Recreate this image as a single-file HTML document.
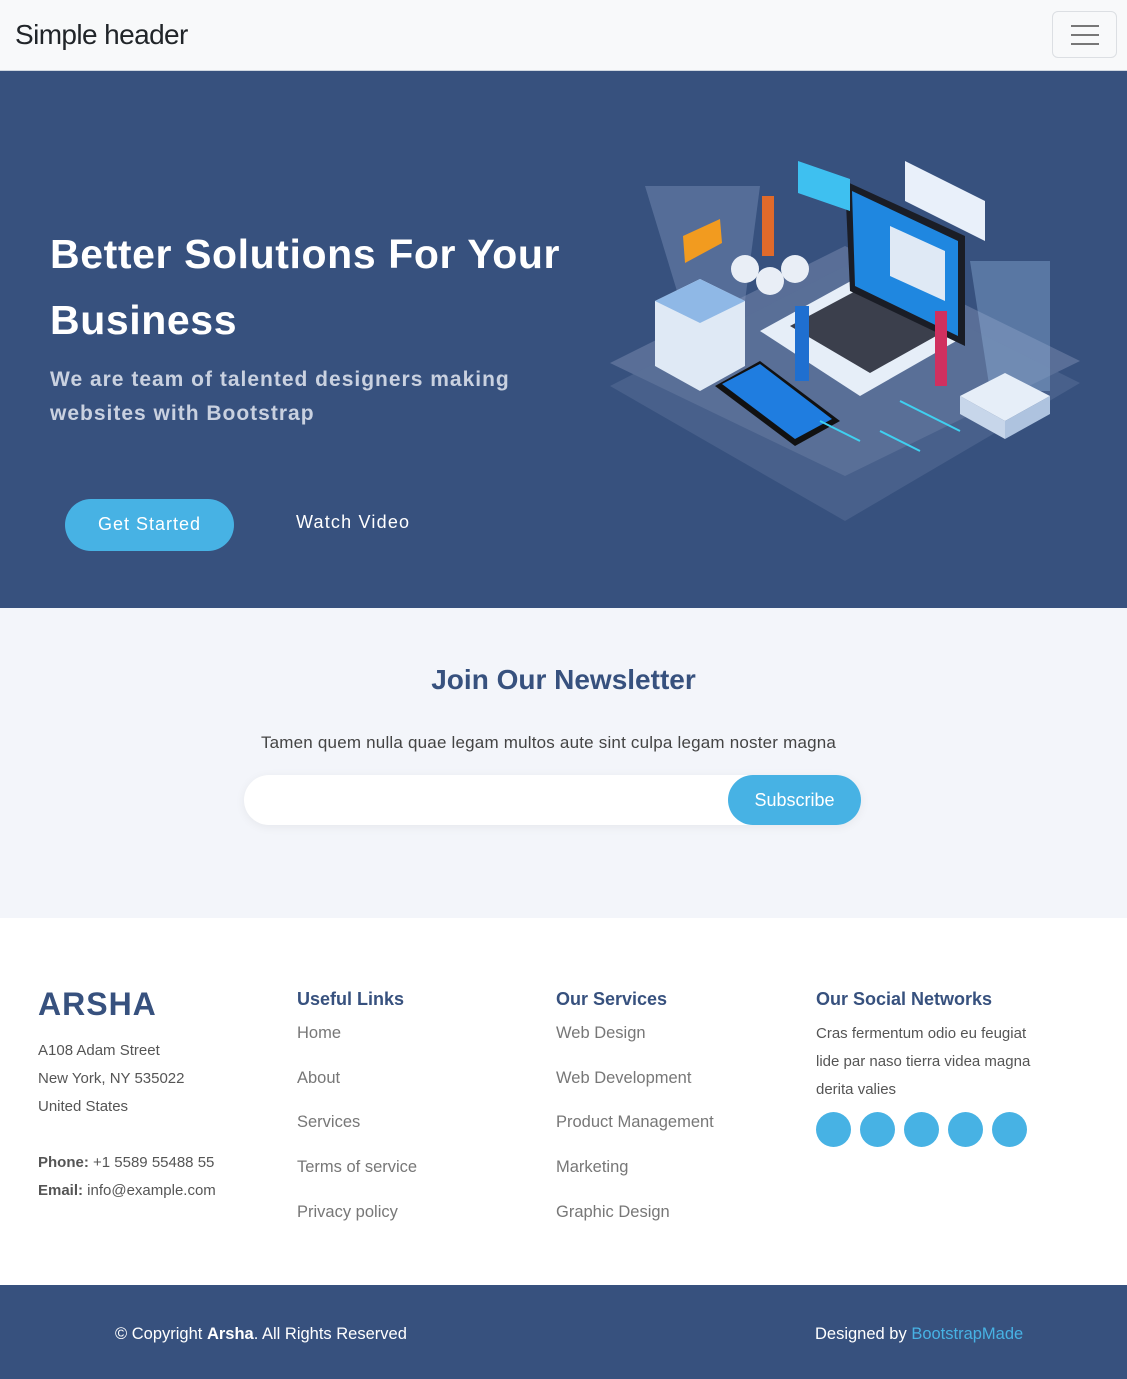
<!DOCTYPE html>
<html><head><meta charset="utf-8"><style>
*{margin:0;padding:0;box-sizing:border-box}
body{width:1127px;height:1379px;font-family:"Liberation Sans",sans-serif;background:#fff;overflow:hidden;position:relative}
.hdr{height:71px;background:#f8f9fa;border-bottom:1px solid #cfd6e0;position:relative}
.hdr h1{position:absolute;left:15px;top:19px;font-size:28px;font-weight:400;color:#212529;letter-spacing:-0.6px}
.tog{position:absolute;left:1052px;top:11px;width:65px;height:47px;border:1px solid #dcdfe3;border-radius:6px}
.tog i{position:absolute;left:18px;width:28px;height:2px;background:#777}
.hero{position:absolute;top:71px;left:0;width:1127px;height:537px;background:#37517e}
.hero h2{position:absolute;left:50px;top:150px;color:#fff;font-size:41px;font-weight:700;line-height:66px;letter-spacing:0.6px;width:560px}
.hero p{position:absolute;left:50px;top:292px;color:#c9d1e0;font-size:21px;font-weight:700;line-height:34px;letter-spacing:1px;width:500px}
.btn{position:absolute;left:65px;top:428px;width:169px;height:52px;border-radius:26px;background:#47b2e4;color:#fff;font-size:18px;text-align:center;line-height:50px;letter-spacing:1px}
.wv{position:absolute;left:296px;top:441px;color:#fff;font-size:18px;letter-spacing:1.2px}
.nl{position:absolute;top:608px;left:0;width:1127px;height:310px;background:#f3f5fa;text-align:center}
.nl h3{position:absolute;top:56px;width:100%;font-size:28px;color:#37517e;font-weight:700}
.nl p{position:absolute;top:125px;width:100%;left:-15px;font-size:17px;color:#444;letter-spacing:.2px}
.inp{position:absolute;left:244px;top:167px;width:617px;height:50px;background:#fff;border-radius:25px;box-shadow:0 2px 10px rgba(0,0,0,.06)}
.sub{position:absolute;right:0;top:0;width:133px;height:50px;border-radius:25px;background:#47b2e4;color:#fff;font-size:18px;line-height:50px}
.ft{position:absolute;top:918px;left:0;width:1127px}
.col{position:absolute;top:71px}
.col h4{font-size:18px;color:#37517e;font-weight:700;margin-bottom:10px}
.col a{display:block;font-size:16.5px;color:#777;height:44.7px;position:relative;top:4px}
.bar{position:absolute;top:1285px;left:0;width:1127px;height:94px;background:#37517e;color:#fff;font-size:16.5px}
</style></head><body>
<div class="hdr"><h1>Simple header</h1><div class="tog"><i style="top:13px"></i><i style="top:22px"></i><i style="top:31px"></i></div></div>
<div class="hero">
<h2>Better Solutions For Your Business</h2>
<p>We are team of talented designers making websites with Bootstrap</p>
<div class="btn">Get Started</div><div class="wv">Watch Video</div>
<svg style="position:absolute;left:600px;top:50px" width="500" height="410" viewBox="600 120 500 410">
<polygon points="610,362 845,245 1080,360 845,475" fill="#6f82a8" opacity=".6"/>
<polygon points="610,385 845,265 1080,382 845,520" fill="#5a6f98" opacity=".5"/>
<polygon points="645,185 760,185 745,300 680,300" fill="#8ea4c8" opacity=".35"/>
<polygon points="970,260 1050,260 1050,390 990,390" fill="#9cc0e8" opacity=".35"/>
<polygon points="655,300 700,278 745,300 745,365 700,390 655,365" fill="#dfe9f5"/>
<polygon points="655,300 700,278 745,300 700,322" fill="#8fb8e6"/>
<polygon points="760,330 860,275 965,335 860,395" fill="#e6eef8"/>
<polygon points="790,325 865,285 945,330 870,372" fill="#3b3f4c"/>
<polygon points="845,180 965,235 965,345 850,290" fill="#1a1d26"/>
<polygon points="852,190 958,240 958,335 855,285" fill="#1f87e0"/>
<polygon points="890,225 945,250 945,300 890,275" fill="#dfe9f5"/>
<polygon points="715,385 760,360 840,420 795,445" fill="#111"/>
<polygon points="722,383 760,363 832,418 795,438" fill="#1f7de0"/>
<polygon points="960,395 1005,372 1050,395 1005,420" fill="#e6eef8"/>
<polygon points="960,395 1005,420 1005,438 960,413" fill="#c7d6ea"/>
<polygon points="1005,420 1050,395 1050,413 1005,438" fill="#aec3df"/>
<polygon points="798,160 850,178 850,210 798,192" fill="#3ec0f0"/>
<polygon points="905,160 985,200 985,240 905,200" fill="#e9f0fa"/>
<polygon points="683,235 720,218 722,242 685,262" fill="#f29b1f"/>
<circle cx="745" cy="268" r="14" fill="#e9eef6"/><circle cx="795" cy="268" r="14" fill="#e9eef6"/><circle cx="770" cy="280" r="14" fill="#e9eef6"/>
<rect x="762" y="195" width="12" height="60" fill="#e06a2a"/>
<rect x="795" y="305" width="14" height="75" fill="#1f6fd0"/>
<rect x="935" y="310" width="12" height="75" fill="#d0305f"/>
<path d="M820 420 L860 440 M880 430 L920 450 M900 400 L960 430" stroke="#3fd0f0" stroke-width="2"/>
</svg>
</div>
<div class="nl"><h3>Join Our Newsletter</h3><p>Tamen quem nulla quae legam multos aute sint culpa legam noster magna</p>
<div class="inp"><div class="sub">Subscribe</div></div></div>
<div class="ft">
<div class="col" style="left:38px;top:68px"><div style="font-size:32px;font-weight:700;color:#37517e;letter-spacing:1px;margin-bottom:14px">ARSHA</div>
<div style="font-size:15px;color:#555;line-height:28px">A108 Adam Street<br>New York, NY 535022<br>United States<br><br><b>Phone:</b> +1 5589 55488 55<br><b>Email:</b> info@example.com</div></div>
<div class="col" style="left:297px"><h4>Useful Links</h4><a>Home</a><a>About</a><a>Services</a><a>Terms of service</a><a>Privacy policy</a></div>
<div class="col" style="left:556px"><h4>Our Services</h4><a>Web Design</a><a>Web Development</a><a>Product Management</a><a>Marketing</a><a>Graphic Design</a></div>
<div class="col" style="left:816px"><h4>Our Social Networks</h4><div style="font-size:15px;color:#555;line-height:28px;width:228px;margin-top:6px">Cras fermentum odio eu feugiat lide par naso tierra videa magna derita valies</div>
<div style="margin-top:8px;display:flex;gap:9px"><span style="width:35px;height:35px;border-radius:50%;background:#47b2e4"></span><span style="width:35px;height:35px;border-radius:50%;background:#47b2e4"></span><span style="width:35px;height:35px;border-radius:50%;background:#47b2e4"></span><span style="width:35px;height:35px;border-radius:50%;background:#47b2e4"></span><span style="width:35px;height:35px;border-radius:50%;background:#47b2e4"></span></div></div>
</div>
<div class="bar"><span style="position:absolute;left:115px;top:40px">© Copyright <b>Arsha</b>. All Rights Reserved</span><span style="position:absolute;left:815px;top:40px">Designed by <span style="color:#47b2e4">BootstrapMade</span></span></div>
</body></html>
